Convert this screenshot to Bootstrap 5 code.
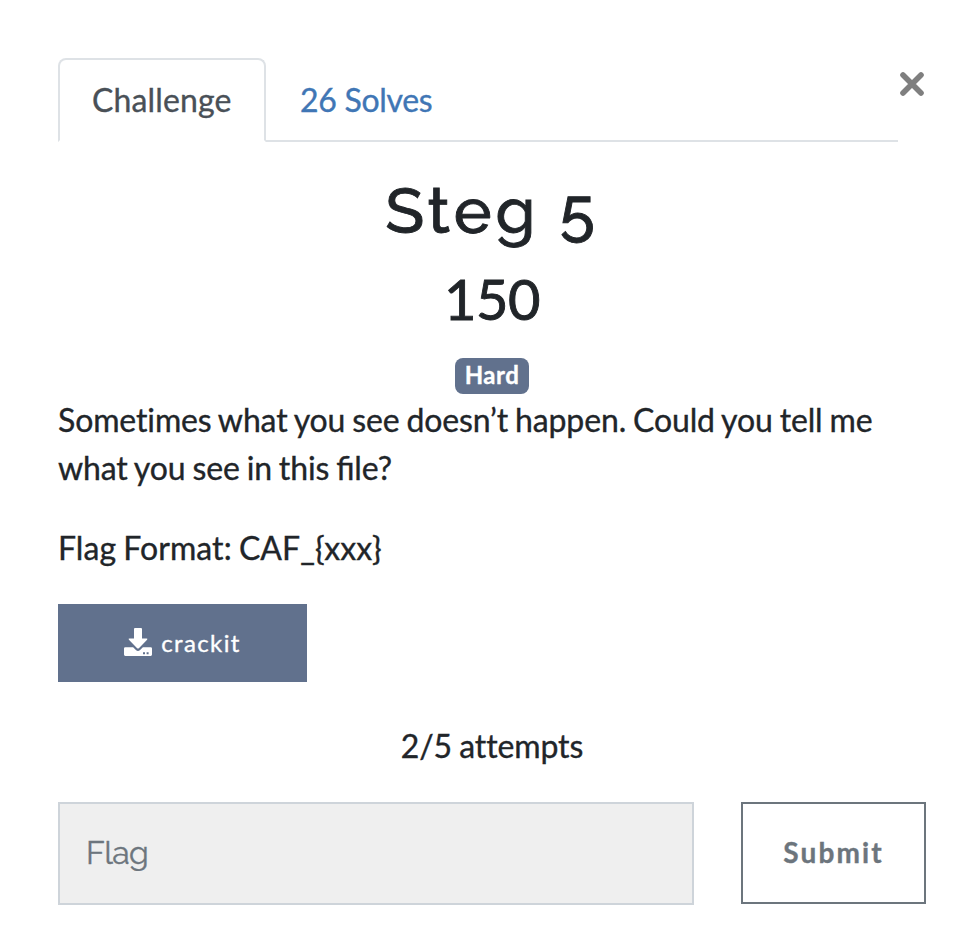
<!DOCTYPE html>
<html lang="en">
<head>
<meta charset="utf-8">
<title>Steg 5</title>
<link href="https://cdn.jsdelivr.net/npm/bootstrap@5.3.0/dist/css/bootstrap.min.css" rel="stylesheet">
<style>
body{font-family:Lato,sans-serif;font-size:32px;line-height:48px;color:#212529;background:#fff;-webkit-text-stroke:.35px currentColor}
.dialog-pane{padding:58px 50px 0 58px}
.tab-strip{width:840px;height:84px;border-bottom:2px solid #dee2e6}
.tab-strip .nav-link{padding:16px 32px;border:2px solid transparent;border-radius:8px 8px 0 0;height:84px;margin-bottom:-2px;color:#4076b5;letter-spacing:-.3px}
.tab-strip .nav-link.active{width:208px;color:#495057;border-color:#dee2e6 #dee2e6 #fff;letter-spacing:.15px}
.dismiss{width:28px;height:28px;margin-top:12px}
.title-text{font-family:Raleway,Lato,sans-serif;font-weight:500;font-size:64px;line-height:77px;letter-spacing:4px;margin:30px 0 16px;-webkit-text-stroke-width:.9px}
.points{font-size:56px;line-height:68px;font-weight:400;letter-spacing:-.5px;margin-bottom:17px;-webkit-text-stroke-width:.9px}
.level-row{height:46px}
.level{background:#61718d;font-size:24px;line-height:24px;padding:5px 9.500px 7px;border-radius:8px;font-weight:700;letter-spacing:.5px;position:relative;top:-2px}
.prose{letter-spacing:-.13px;word-spacing:-1.1px;font-variant-ligatures:none;margin-bottom:32px}
.ligated{font-variant-ligatures:normal;font-feature-settings:"liga" 1}
.format-line{letter-spacing:.05px;word-spacing:-1px;margin-bottom:32px}
.file-btn,.file-btn:hover{width:249px;height:78px;background:#61718d;color:#fff;border-radius:0;font-size:24px;letter-spacing:1.4px}
.file-btn svg{width:28px;height:28px;margin:-3px 9px 0 0}
.attempts{margin:40px 0 32px;letter-spacing:-.1px;word-spacing:-1px;font-variant-ligatures:none}
.flag-box{width:636px;height:103px;border:2px solid #ced4da;background:#efefef;border-radius:0;font-size:32px;padding:0 26px 4px}
.flag-box::placeholder{font-family:Raleway,Lato,sans-serif;letter-spacing:-.7px;color:#6c757d;opacity:1}
.submit-btn{width:185px;height:102px;border:2px solid #6c757d;border-radius:0;color:#6c757d;font-size:28px;font-weight:700;letter-spacing:2.1px;padding:0 0 2px}
</style>
<script src="https://cdn.jsdelivr.net/npm/bootstrap@5.3.0/dist/js/bootstrap.bundle.min.js"></script>
</head>
<body>
<main class="dialog-pane">
<div class="d-flex"><ul class="nav nav-tabs tab-strip"><li class="nav-item"><a class="nav-link active">Challenge</a></li><li class="nav-item"><a class="nav-link">26 Solves</a></li></ul>
<svg class="dismiss" viewBox="0 0 28 28"><path d="M5 5 23 23M23 5 5 23" stroke="#7f7f7f" stroke-width="5.6" stroke-linecap="round"/></svg></div>
<h2 class="title-text text-center">Steg 5</h2>
<h3 class="points text-center">150</h3>
<div class="text-center level-row"><span class="badge level">Hard</span></div>
<p class="prose">Sometimes what you see doesn’t happen. Could you tell me <span class="ligated d-block">what you see in this file?</span></p>
<p class="format-line">Flag Format: CAF_{xxx}</p>
<button class="btn file-btn d-flex align-items-center justify-content-center"><svg viewBox="0 0 28 28" fill="#fff"><path d="M11 0h6q1 0 1 1v9.500h4.500q1.500 0 .6 1.200l-8 8.300q-1.100 1-2.200 0l-8-8.300Q4 10.500 5.500 10.500H10V1q0-1 1-1z"/><path fill-rule="evenodd" d="M1.300 19.300h7.800l2.800 2.800q2.100 1.700 4.200 0l2.800-2.800h7.800q1.300 0 1.300 1.300v6q0 1.400-1.300 1.400H1.300Q0 28 0 26.600v-6q0-1.300 1.300-1.300zm17.700 5v2h2v-2zm3.600 0v2h2v-2z"/></svg>crackit</button>
<p class="text-center attempts">2/5 attempts</p>
<div class="d-flex justify-content-between"><input class="form-control flag-box" placeholder="Flag"><button class="btn submit-btn">Submit</button></div>
</main>
</body>
</html>
